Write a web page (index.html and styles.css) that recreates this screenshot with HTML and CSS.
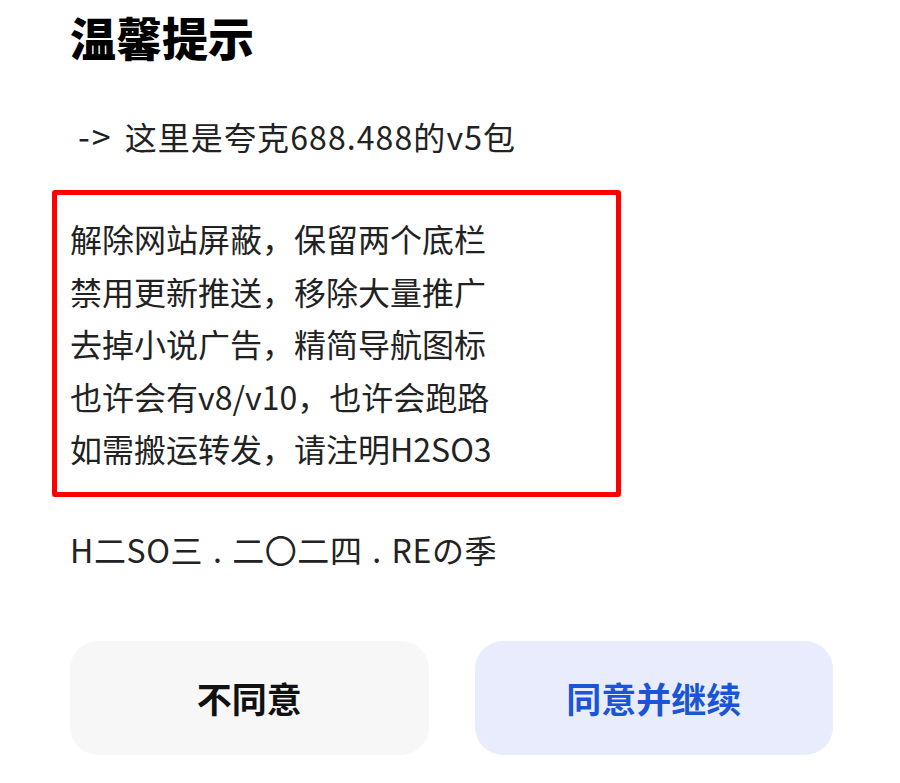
FILE: index.html
```html
<!DOCTYPE html>
<html lang="zh-CN">
<head>
<meta charset="utf-8">
<link rel="stylesheet" href="styles.css">
</head>
<body>
<div class="dialog">
  <h1 class="title">温馨提示</h1>
  <p class="intro"><span class="arrow">-&gt;</span>这里是夸克688.488的v5包</p>
  <div class="notice">
    <p>解除网站屏蔽，保留两个底栏</p>
    <p>禁用更新推送，移除大量推广</p>
    <p>去掉小说广告，精简导航图标</p>
    <p>也许会有v8/v10，也许会跑路</p>
    <p>如需搬运转发，请注明H2SO3</p>
  </div>
  <p class="sign">H二SO三 . 二〇二四 . REの季</p>
  <div class="actions">
    <button class="btn btn-cancel">不同意</button>
    <button class="btn btn-ok">同意并继续</button>
  </div>
</div>
</body>
</html>
```
FILE: styles.css
```css
html, body {
  margin: 0;
  padding: 0;
  background: #ffffff;
}
body {
  font-family: "Noto Sans CJK SC", "Noto Sans", sans-serif;
  color: #222222;
}
.dialog {
  width: 900px;
  height: 783px;
  box-sizing: border-box;
  padding: 8px 67px 0 70px;
  display: flex;
  flex-direction: column;
  overflow: hidden;
}
.title {
  margin: 0;
  font-size: 46px;
  font-weight: 900;
  line-height: 56px;
  color: #000000;
}
.intro {
  margin: 46px 0 0 8px;
  font-size: 32px;
  line-height: 52px;
  letter-spacing: 1.1px;
}
.arrow {
  display: inline-block;
  font-size: 34px;
  letter-spacing: 2px;
  margin-right: 12px;
}
.notice {
  margin: 28px 0 0 -18px;
  width: 569px;
  box-sizing: border-box;
  border: 5px solid #ff0000;
  border-radius: 3px;
  padding: 17px 0 17px 13px;
}
.notice p {
  margin: 0;
  font-size: 32px;
  line-height: 52.5px;
}
.sign {
  margin: 26px 0 0 0;
  font-size: 32px;
  line-height: 52px;
  letter-spacing: 0.6px;
  word-spacing: 2px;
}
.actions {
  margin-top: 66px;
  display: flex;
  gap: 46px;
}
.btn {
  flex: 1;
  height: 114px;
  border: none;
  border-radius: 28px;
  font-family: "Noto Sans CJK SC", "Noto Sans", sans-serif;
  font-size: 35px;
  font-weight: 700;
  padding: 0;
}
.btn-cancel {
  background: #f7f7f7;
  color: #111111;
}
.btn-ok {
  background: #e9ecfc;
  color: #1a55d6;
}
```
